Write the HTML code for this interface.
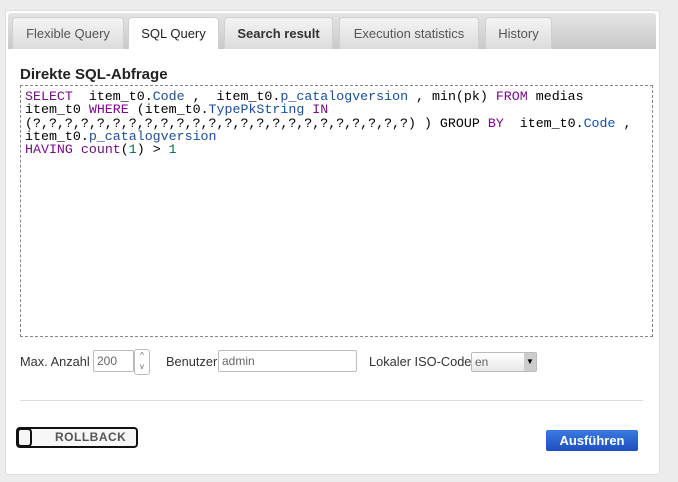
<!DOCTYPE html><html><head><style>
body{margin:0;width:678px;height:482px;background:#ececec;font-family:"Liberation Sans",sans-serif;position:relative;overflow:hidden}
.panel{position:absolute;left:5px;top:10px;width:653px;height:463px;background:#fff;border:1px solid #ddd;border-radius:3px}
.bar{position:absolute;left:8px;top:13px;width:648px;height:36px;background:linear-gradient(#e4e4e4,#c9c9c9);border-radius:3px 3px 0 0}
.tab{position:absolute;top:17px;height:32px;background:linear-gradient(#f4f4f4,#dcdcdc);border:1px solid #d0d0d0;border-bottom:none;border-radius:4px 4px 0 0;font-size:13px;color:#555;line-height:32px;text-align:center;box-sizing:border-box}
.tab.a{background:#fff;color:#222}
h1{position:absolute;left:20px;top:66px;margin:0;font-size:15px;color:#222}
.ta{position:absolute;left:20px;top:85px;width:633px;height:252px;border:1px dashed #888;box-sizing:border-box;font-family:"Liberation Mono",monospace;font-size:13.3px;line-height:13.3px;padding:4px 4px;color:#000;white-space:pre}
.k{color:#7a0a8a}.b{color:#1550a0}.n{color:#0a6a40}
.lbl{position:absolute;top:354px;font-size:12.8px;color:#333}
.in{position:absolute;border:1px solid #bbb;border-radius:2px;font-size:12px;color:#666;box-sizing:border-box;padding-left:3px;line-height:20px;height:22px;top:350px}
</style></head><body>
<div class="panel"></div><div class="bar"></div>
<div class="tab" style="left:12px;width:112px">Flexible Query</div>
<div class="tab a" style="left:128px;width:91px">SQL Query</div>
<div class="tab" style="left:224px;width:109px;font-weight:bold;color:#333">Search result</div>
<div class="tab" style="left:339px;width:140px">Execution statistics</div>
<div class="tab" style="left:485px;width:67px">History</div>
<h1>Direkte SQL-Abfrage</h1>
<div class="ta"><span class="k">SELECT</span>  item_t0.<span class="b">Code</span> ,  item_t0.<span class="b">p_catalogversion</span> , min(pk) <span class="k">FROM</span> medias
item_t0 <span class="k">WHERE</span> (item_t0.<span class="b">TypePkString</span> <span class="k">IN</span>
(?,?,?,?,?,?,?,?,?,?,?,?,?,?,?,?,?,?,?,?,?,?,?,?) ) GROUP <span class="k">BY</span>  item_t0.<span class="b">Code</span> ,
item_t0.<span class="b">p_catalogversion</span>
<span class="k">HAVING</span> <span class="k">count</span>(<span class="n">1</span>) &gt; <span class="n">1</span></div>
<div class="lbl" style="left:20px">Max. Anzahl</div>
<div class="in" style="left:93px;width:41px;top:350px">200</div>
<div style="position:absolute;left:134px;top:349px;width:14px;height:24px;border:1px solid #bbb;border-radius:3px;font-size:8px;color:#666;text-align:center;line-height:11px">^<br>v</div>
<div class="lbl" style="left:166px">Benutzer</div>
<div class="in" style="left:218px;width:139px">admin</div>
<div class="lbl" style="left:369px">Lokaler ISO-Code</div>
<div class="in" style="left:471px;width:66px;height:20px;top:352px;line-height:18px;background:linear-gradient(#fff,#e8e8e8)">en<span style="position:absolute;right:0;top:0;width:12px;height:18px;background:#ccc;font-size:8px;text-align:center;color:#000">▼</span></div>
<div style="position:absolute;left:20px;top:400px;width:623px;height:1px;background:#ddd"></div>
<div style="position:absolute;left:16px;top:427px;width:122px;height:21px;border:2px solid #111;border-radius:4px;box-sizing:border-box;background:#f7f7f7;font-size:12px;font-weight:bold;color:#555;line-height:17px;padding-left:37px;letter-spacing:.5px">ROLLBACK<span style="position:absolute;left:-1px;top:-1px;width:11px;height:15px;border:2px solid #111;border-radius:4px;background:#f7f7f7"></span></div>
<div style="position:absolute;left:546px;top:430px;width:92px;height:21px;background:linear-gradient(#3a7ae0,#1f4fc0);border-radius:2px;color:#fff;font-weight:bold;font-size:13px;text-align:center;line-height:21px">Ausführen</div>
</body></html>
